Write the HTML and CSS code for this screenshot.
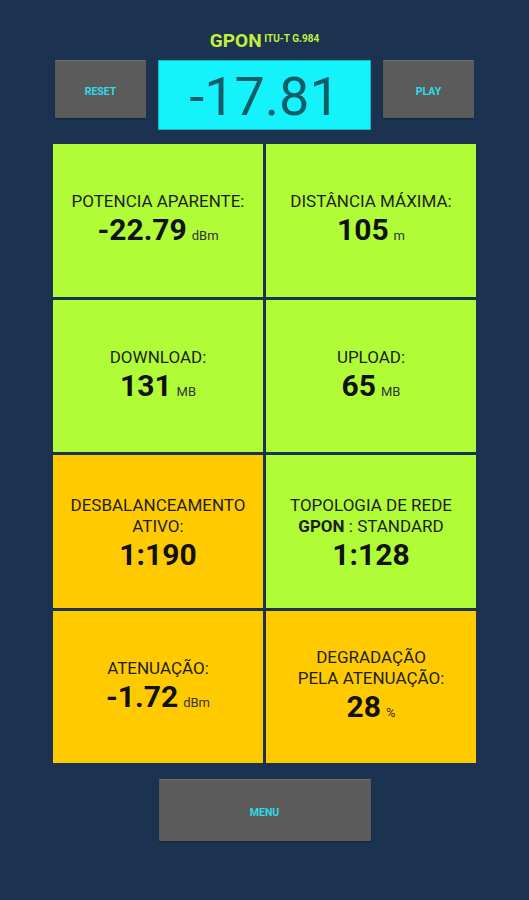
FILE: index.html
```html
<!DOCTYPE html>
<html lang="pt">
<head>
    <meta charset="UTF-8">
    <meta name="viewport" content="width=device-width, initial-scale=1.0">
    <title>GPON</title>
    <link rel="stylesheet" href="styles.css">
</head>
<body>
    <div class="screen">
        <h1 class="title">GPON <sup>ITU-T G.984</sup></h1>

        <div class="top-row">
            <button class="btn">RESET</button>
            <div class="reading">-17.81</div>
            <button class="btn">PLAY</button>
        </div>

        <div class="grid">
            <div class="cell ok">
                <p class="label">POTENCIA APARENTE:</p>
                <p class="value">-22.79<span class="unit">dBm</span></p>
            </div>
            <div class="cell ok">
                <p class="label">DISTÂNCIA MÁXIMA:</p>
                <p class="value">105<span class="unit">m</span></p>
            </div>
            <div class="cell ok">
                <p class="label">DOWNLOAD:</p>
                <p class="value">131<span class="unit">MB</span></p>
            </div>
            <div class="cell ok">
                <p class="label">UPLOAD:</p>
                <p class="value">65<span class="unit">MB</span></p>
            </div>
            <div class="cell warn">
                <p class="label">DESBALANCEAMENTO<br>ATIVO:</p>
                <p class="value">1:190</p>
            </div>
            <div class="cell ok">
                <p class="label">TOPOLOGIA DE REDE<br><b>GPON</b> : STANDARD</p>
                <p class="value">1:128</p>
            </div>
            <div class="cell warn">
                <p class="label">ATENUAÇÃO:</p>
                <p class="value">-1.72<span class="unit">dBm</span></p>
            </div>
            <div class="cell warn">
                <p class="label">DEGRADAÇÃO<br>PELA ATENUAÇÃO:</p>
                <p class="value">28<span class="unit">%</span></p>
            </div>
        </div>

        <button class="btn menu-btn">MENU</button>
    </div>
</body>
</html>
```

FILE: styles.css
```css
body {
    margin: 0;
    padding: 0;
    background-color: #1b3350;
    font-family: Roboto, "Liberation Sans", sans-serif;
    min-height: 100vh;
}
.screen {
    display: flex;
    flex-direction: column;
    align-items: center;
    padding-top: 29px;
}
.title {
    margin: 0;
    height: 31px;
    color: #c4f03c;
    font-size: 19px;
    font-weight: bold;
    line-height: 24px;
}
.title sup {
    font-size: 10px;
    vertical-align: top;
    position: relative;
    top: -2px;
    margin-left: -2px;
}
.top-row {
    display: flex;
    align-items: flex-start;
    gap: 12px;
}
.btn {
    width: 91px;
    height: 58px;
    background-color: #5b5b5b;
    border: none;
    border-top: 1px solid #707070;
    border-radius: 1px;
    box-shadow: 0 1px 2px rgba(0, 0, 0, 0.3);
    color: #2fdbe6;
    font-family: Roboto, sans-serif;
    font-size: 10.5px;
    font-weight: bold;
    padding: 3px 0 0;
}
.reading {
    width: 211px;
    height: 68px;
    background-color: #14f3fb;
    border: 1px solid #0cb9c2;
    color: #125e68;
    font-size: 54px;
    line-height: 72px;
    text-align: center;
}
.grid {
    margin-top: 14px;
    width: 423px;
    display: grid;
    grid-template-columns: 1fr 1fr;
    grid-auto-rows: 152.5px;
    gap: 3px;
}
.cell {
    display: flex;
    flex-direction: column;
    justify-content: center;
    align-items: center;
    text-align: center;
    color: #1e1e1e;
    padding-top: 4px;
}
.ok {
    background-color: #b0fc36;
}
.warn {
    background-color: #ffcb00;
}
.label {
    margin: 0;
    font-size: 17px;
    line-height: 21px;
}
.value {
    margin: 0;
    font-size: 30px;
    font-weight: bold;
    line-height: 35px;
    color: #111;
}
.unit {
    font-size: 13px;
    font-weight: normal;
    color: #333;
    margin-left: 5px;
}
.menu-btn {
    margin-top: 16px;
    width: 212px;
    height: 62px;
}
```
